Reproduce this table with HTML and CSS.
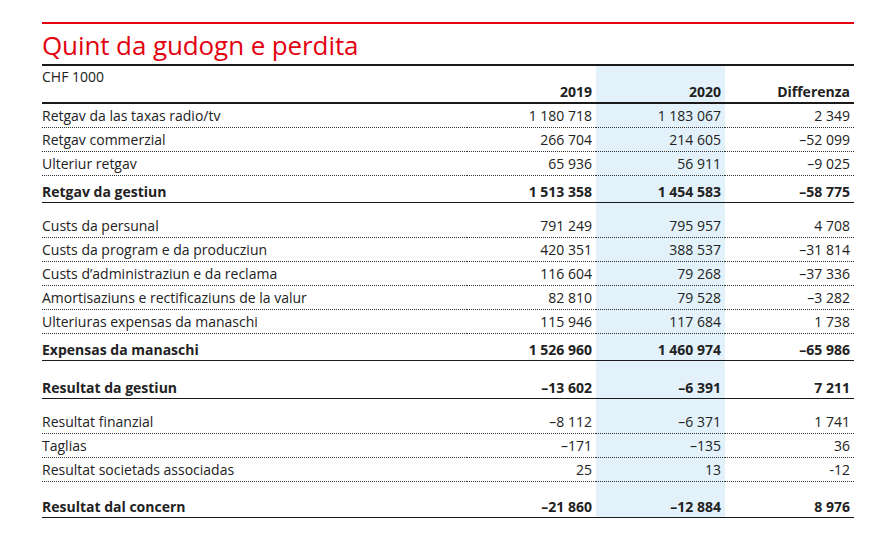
FILE: index.html
```html
<!DOCTYPE html>
<html lang="rm">
<head>
<meta charset="utf-8">
<title>Quint da gudogn e perdita</title>
<link rel="stylesheet" href="styles.css">
</head>
<body>
<div class="report">
  <h1 class="title">Quint da gudogn e perdita</h1>
  <table class="fin">
    <colgroup>
      <col class="c-label"><col class="c-num"><col class="c-num c-hl"><col class="c-num">
    </colgroup>
    <thead>
      <tr>
        <th class="unit">CHF 1000</th>
        <th class="yr">2019</th>
        <th class="yr hl">2020</th>
        <th class="yr">Differenza</th>
      </tr>
    </thead>
    <tbody>
      <tr class="row"><td>Retgav da las taxas radio/tv</td><td>1 180 718</td><td class="hl">1 183 067</td><td>2 349</td></tr>
      <tr class="row"><td>Retgav commerzial</td><td>266 704</td><td class="hl">214 605</td><td>–52 099</td></tr>
      <tr class="row"><td>Ulteriur retgav</td><td>65 936</td><td class="hl">56 911</td><td>–9 025</td></tr>
      <tr class="total"><td>Retgav da gestiun</td><td>1 513 358</td><td class="hl">1 454 583</td><td>–58 775</td></tr>
      <tr class="gap"><td></td><td></td><td class="hl"></td><td></td></tr>
      <tr class="row"><td>Custs da persunal</td><td>791 249</td><td class="hl">795 957</td><td>4 708</td></tr>
      <tr class="row"><td>Custs da program e da producziun</td><td>420 351</td><td class="hl">388 537</td><td>–31 814</td></tr>
      <tr class="row"><td>Custs d’administraziun e da reclama</td><td>116 604</td><td class="hl">79 268</td><td>–37 336</td></tr>
      <tr class="row"><td>Amortisaziuns e rectificaziuns de la valur</td><td>82 810</td><td class="hl">79 528</td><td>–3 282</td></tr>
      <tr class="row"><td>Ulteriuras expensas da manaschi</td><td>115 946</td><td class="hl">117 684</td><td>1 738</td></tr>
      <tr class="total"><td>Expensas da manaschi</td><td>1 526 960</td><td class="hl">1 460 974</td><td>–65 986</td></tr>
      <tr class="gap"><td></td><td></td><td class="hl"></td><td></td></tr>
      <tr class="total"><td>Resultat da gestiun</td><td>–13 602</td><td class="hl">–6 391</td><td>7 211</td></tr>
      <tr class="gap"><td></td><td></td><td class="hl"></td><td></td></tr>
      <tr class="row"><td>Resultat finanzial</td><td>–8 112</td><td class="hl">–6 371</td><td>1 741</td></tr>
      <tr class="row"><td>Taglias</td><td>–171</td><td class="hl">–135</td><td>36</td></tr>
      <tr class="row"><td>Resultat societads associadas</td><td>25</td><td class="hl">13</td><td>-12</td></tr>
      <tr class="gap gap-s"><td></td><td></td><td class="hl"></td><td></td></tr>
      <tr class="total"><td>Resultat dal concern</td><td>–21 860</td><td class="hl">–12 884</td><td>8 976</td></tr>
    </tbody>
  </table>
</div>
</body>
</html>
```
FILE: styles.css
```css
html, body {
  margin: 0;
  padding: 0;
  background: #ffffff;
}

body {
  font-family: "Open Sans", "Noto Sans", sans-serif;
  color: #222222;
}

.report {
  width: 812px;
  margin: 22px 0 0 42px;
}

.title {
  margin: 0;
  padding: 6px 0 4px;
  border-top: 2px solid #e3000f;
  border-bottom: 2px solid #1a1a1a;
  font-size: 26px;
  line-height: 30px;
  font-weight: 400;
  color: #e3000f;
  letter-spacing: -0.1px;
}

.fin {
  width: 812px;
  border-collapse: collapse;
  table-layout: fixed;
  font-size: 14px;
  line-height: 18px;
}

.c-label { width: 425px; }
.c-num { width: 129px; }

.fin th,
.fin td {
  padding: 0 4px 0 0;
  text-align: right;
  white-space: nowrap;
}

.fin th:first-child,
.fin td:first-child {
  text-align: left;
}

.fin .hl {
  background: #e3f2fa;
}

.fin thead tr {
  border-bottom: 2px solid #1a1a1a;
}

.fin thead th {
  height: 37px;
  box-sizing: border-box;
}

.fin .unit {
  font-weight: 400;
  vertical-align: top;
  padding-top: 2px;
}

.fin .yr {
  font-weight: 700;
  vertical-align: bottom;
  padding-bottom: 1px;
}

.fin .row td {
  height: 23px;
  vertical-align: middle;
}

.fin .row {
  border-bottom: 1px dotted #333333;
}

.fin .total {
  border-bottom: 1px solid #1a1a1a;
  font-weight: 700;
}

.fin .total td {
  height: 25px;
  vertical-align: bottom;
  padding-bottom: 1px;
}

.fin .gap td {
  height: 11px;
  padding: 0;
  line-height: 0;
  font-size: 0;
}

.fin .gap-s td {
  height: 9px;
}
```
